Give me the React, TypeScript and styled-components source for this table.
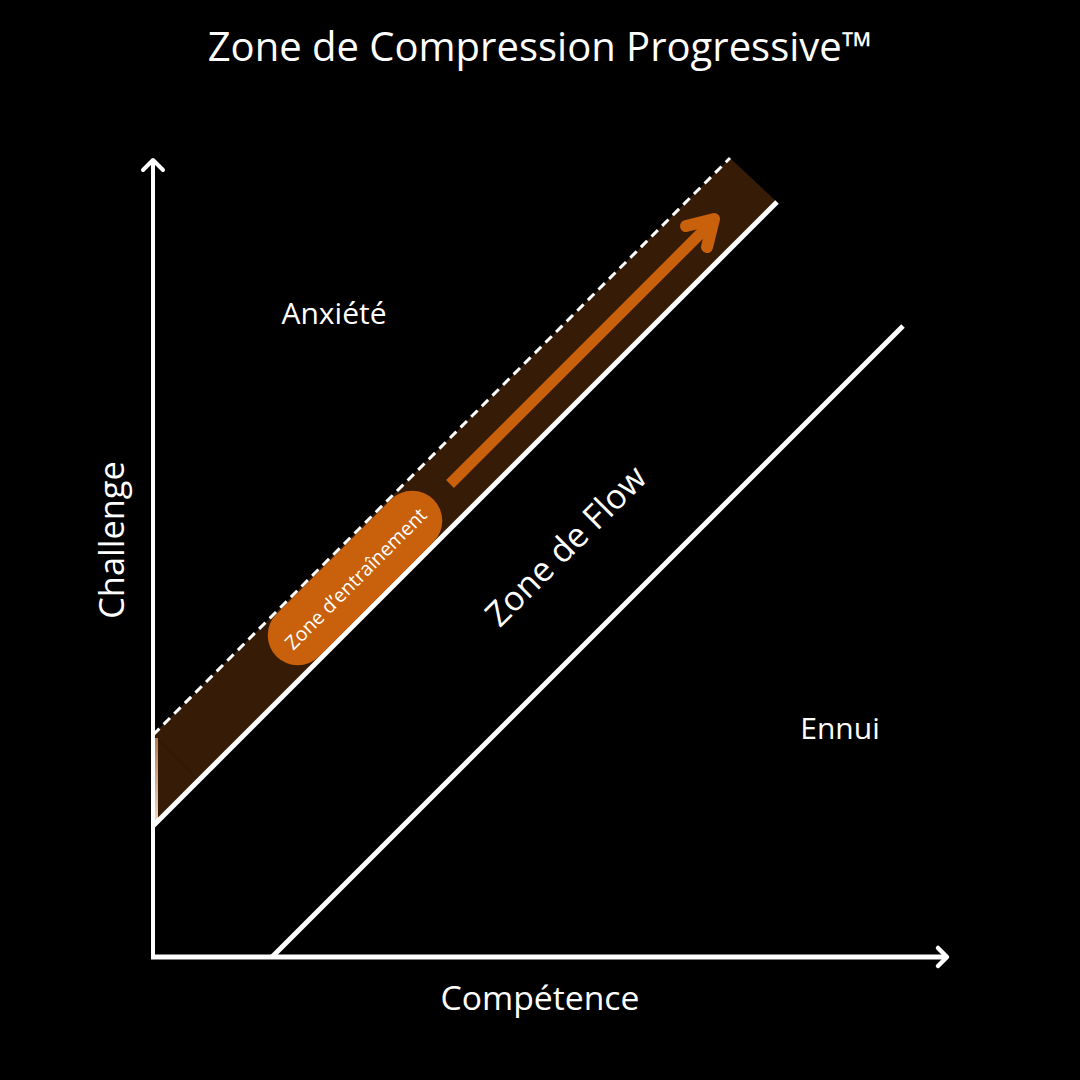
import React from "react";
import styled, { createGlobalStyle } from "styled-components";

const TITLE_H = 96;

const Global = createGlobalStyle`
  html, body { margin: 0; padding: 0; background: #000; }
  body { font-family: "Open Sans", "Noto Sans", sans-serif; }
`;

const Frame = styled.div`
  width: 1080px;
  height: 1080px;
  background: #000;
  display: grid;
  grid-template-rows: ${TITLE_H}px 1fr;
  overflow: hidden;
`;

const Title = styled.h1`
  margin: 0;
  color: #fff;
  font-family: "Open Sans", "Noto Sans", sans-serif;
  font-weight: 400;
  font-size: 40px;
  line-height: 1;
  display: flex;
  align-items: center;
  justify-content: center;
  padding-bottom: 4px;
`;

const Canvas = styled.div`
  position: relative;
  width: 1080px;
  height: ${1080 - TITLE_H}px;
`;

const ChartSvg = styled.svg`
  position: absolute;
  inset: 0;
  display: block;
`;

const Label = styled.span<{ $x: number; $y: number; $size: number; $rot?: number }>`
  position: absolute;
  left: ${(p) => p.$x}px;
  top: ${(p) => p.$y - TITLE_H}px;
  transform: translate(-50%, -50%) rotate(${(p) => p.$rot ?? 0}deg);
  color: #fff;
  font-family: "Open Sans", "Noto Sans", sans-serif;
  font-size: ${(p) => p.$size}px;
  line-height: 1;
  white-space: nowrap;
`;

const Pill = styled.span<{ $x: number; $y: number }>`
  position: absolute;
  left: ${(p) => p.$x}px;
  top: ${(p) => p.$y - TITLE_H}px;
  width: 222px;
  height: 60px;
  border-radius: 30px;
  background: #c9610c;
  transform: translate(-50%, -50%) rotate(-45deg);
  display: flex;
  align-items: center;
  justify-content: center;
  color: #fff;
  font-family: "Open Sans", "Noto Sans", sans-serif;
  font-size: 19.5px;
  white-space: nowrap;
`;

export default function App() {
  return (
    <>
      <Global />
      <Frame>
        <Title>Zone de Compression Progressive™</Title>
        <Canvas>
          <ChartSvg width={1080} height={1080 - TITLE_H} viewBox={`0 ${TITLE_H} 1080 ${1080 - TITLE_H}`}>
            <defs>
              <linearGradient id="edge" x1="0" y1="735" x2="0" y2="826" gradientUnits="userSpaceOnUse">
                <stop offset="0" stopColor="#b07a50" />
                <stop offset="1" stopColor="#f8dcc4" />
              </linearGradient>
            </defs>
            {/* training band */}
            <polygon points="153,735 730,158 777,202 153,826" fill="#361c06" />
            <line x1="153" y1="735" x2="198" y2="780" stroke="#2a1403" strokeWidth="1" />
            <line x1="156.5" y1="738" x2="156.5" y2="822" stroke="url(#edge)" strokeWidth="3" />
            {/* dashed boundary */}
            <line x1="153" y1="735" x2="730" y2="158" stroke="#fff" strokeWidth="3" strokeDasharray="9 6" />
            {/* solid boundaries */}
            <line x1="153" y1="826" x2="777" y2="202" stroke="#fff" strokeWidth="5" />
            <line x1="272" y1="957" x2="903" y2="326" stroke="#fff" strokeWidth="5" />
            {/* orange progress arrow */}
            <line x1="450" y1="484" x2="710" y2="224" stroke="#c9610c" strokeWidth="11" />
            <polyline
              points="686,226 714,219 707,247"
              fill="none"
              stroke="#c9610c"
              strokeWidth="12"
              strokeLinecap="round"
              strokeLinejoin="round"
            />
            {/* axes */}
            <line x1="153" y1="959" x2="153" y2="160" stroke="#fff" strokeWidth="4" />
            <polyline points="143,170 153,160 163,170" fill="none" stroke="#fff" strokeWidth="4" strokeLinecap="round" strokeLinejoin="round" />
            <line x1="151" y1="957" x2="946" y2="957" stroke="#fff" strokeWidth="5" />
            <polyline points="938,948 947,957 938,966" fill="none" stroke="#fff" strokeWidth="4.5" strokeLinecap="round" strokeLinejoin="round" />
          </ChartSvg>
          <Label $x={334} $y={313} $size={30}>Anxiété</Label>
          <Label $x={840} $y={728} $size={30}>Ennui</Label>
          <Label $x={540} $y={998} $size={33.7}>Compétence</Label>
          <Label $x={111} $y={540} $size={34.4} $rot={-90}>Challenge</Label>
          <Label $x={565} $y={545} $size={34} $rot={-45}>Zone de Flow</Label>
          <Pill $x={355} $y={578}>Zone d’entraînement</Pill>
        </Canvas>
      </Frame>
    </>
  );
}
